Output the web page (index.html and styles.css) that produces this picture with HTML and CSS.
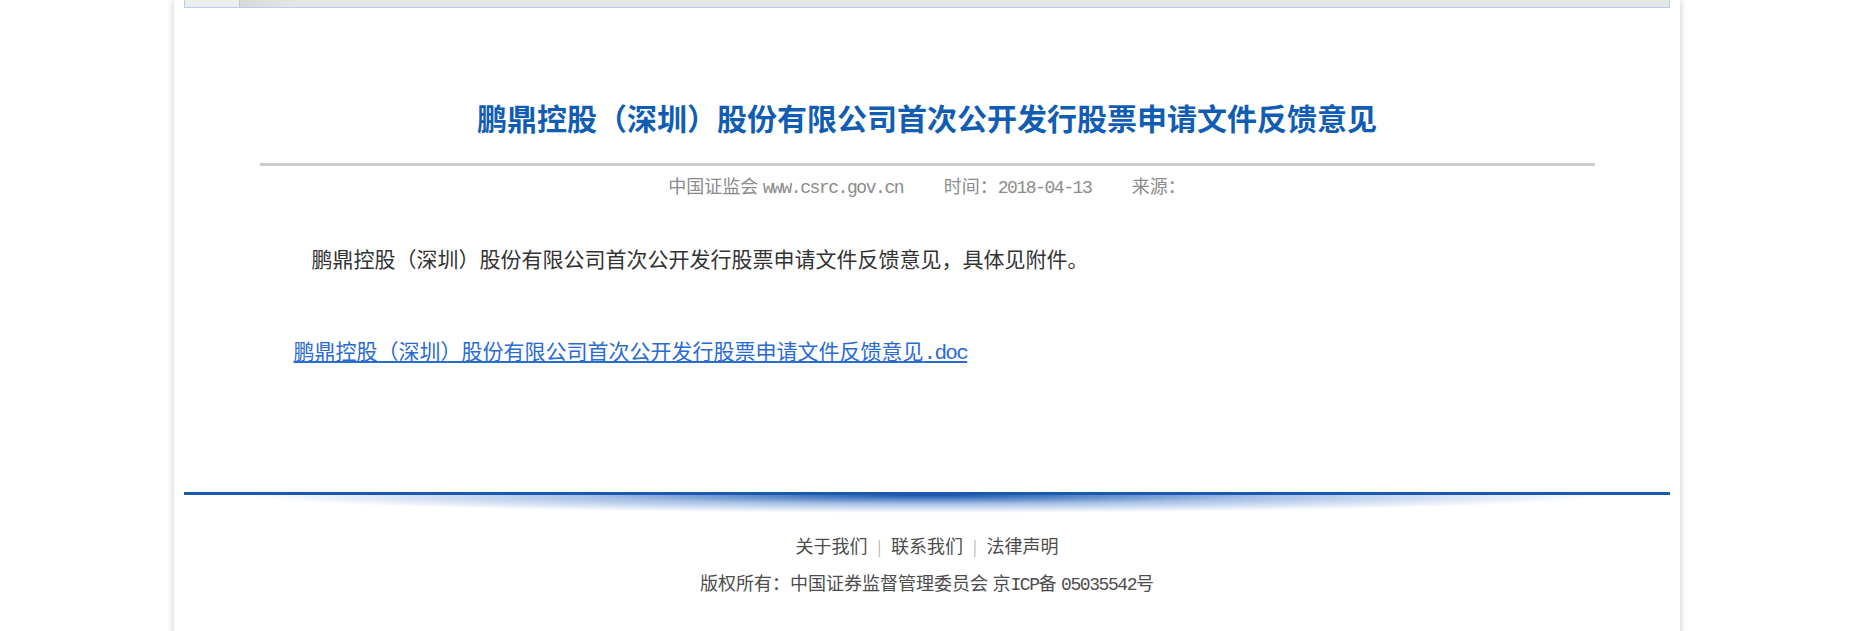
FILE: index.html
```html
<!DOCTYPE html>
<html>
<head>
    <meta charset="utf-8">
    <title>鹏鼎控股（深圳）股份有限公司首次公开发行股票申请文件反馈意见</title>
    <link rel="stylesheet" href="styles.css">
</head>
<body>
    <div class="page">
        <div class="topbar">
            <div class="topbar-home"></div>
            <div class="topbar-rest"></div>
        </div>

        <div class="article">
            <h2 class="title">鹏鼎控股（深圳）股份有限公司首次公开发行股票申请文件反馈意见</h2>
            <div class="meta">
                <span>中国证监会 <span class="en">www.csrc.gov.cn</span></span>
                <span class="meta-item">时间：<span class="en">2018-04-13</span></span>
                <span class="meta-item">来源：</span>
            </div>
            <div class="content">
                <p class="lead">鹏鼎控股（深圳）股份有限公司首次公开发行股票申请文件反馈意见，具体见附件。</p>
                <p class="attach"><a href="#">鹏鼎控股（深圳）股份有限公司首次公开发行股票申请文件反馈意见<span class="en">.doc</span></a></p>
            </div>
        </div>

        <div class="footer">
            <div class="footer-line"></div>
            <div class="footer-glow"></div>
            <div class="footer-links">
                <a href="#">关于我们</a><span class="sep">|</span><a href="#">联系我们</a><span class="sep">|</span><a href="#">法律声明</a>
            </div>
            <div class="copyright">版权所有：中国证券监督管理委员会 京<span class="en">ICP</span>备 <span class="en">05035542</span>号</div>
        </div>
    </div>
</body>
</html>
```

FILE: styles.css
```css
body {
    margin: 0;
    background: #fff;
    font-family: "Liberation Serif", "Noto Sans CJK SC", serif;
    color: #333;
}
.page {
    width: 1486px;
    margin: 0 auto;
    padding: 0 10px 40px;
    background: #fff;
    box-shadow: 0 0 7px rgba(0, 0, 0, 0.22);
}
.topbar {
    display: flex;
    height: 7px;
    border: 1px solid #b7cfeb;
    border-top: none;
}
.topbar-home {
    width: 54px;
    background: #ededed;
    border-right: 1px solid #c8c8c8;
}
.topbar-rest {
    flex: 1;
    background: linear-gradient(to right, #d9d9d9, #e6e6e6 60px, #e6e6e6);
}
.en {
    font-family: "Liberation Mono", monospace;
    letter-spacing: -0.08em;
}
.article {
    width: 1335px;
    margin: 0 auto;
}
.title {
    margin: 0;
    padding: 86px 0 23px;
    line-height: 46px;
    font-family: "Noto Sans CJK SC", sans-serif;
    font-size: 30px;
    font-weight: bold;
    color: #115db4;
    text-align: center;
    border-bottom: 3px solid #cccccc;
}
.meta {
    padding-top: 6px;
    line-height: 30px;
    font-size: 18px;
    color: #8c8c8c;
    text-align: center;
}
.meta-item {
    margin-left: 36px;
}
.content {
    padding: 39px 34px 0;
    font-size: 21px;
}
.content p {
    margin: 0;
    line-height: 36px;
}
.lead {
    text-indent: 18px;
    color: #333;
}
.attach {
    margin-top: 56px !important;
}
.attach a {
    color: #2a6bd0;
    text-decoration: underline;
}
.footer {
    margin-top: 120px;
    text-align: center;
}
.footer-line {
    height: 3px;
    background: #1a5aae;
}
.footer-glow {
    height: 18px;
    background: radial-gradient(ellipse 46% 100% at 50% 0%, rgba(20, 84, 172, 1), rgba(80, 130, 205, 0.5) 50%, rgba(255, 255, 255, 0) 100%);
}
.footer-links {
    margin-top: 19px;
    line-height: 30px;
    font-size: 18px;
}
.footer-links a {
    color: #4d4d4d;
    text-decoration: none;
}
.sep {
    margin: 0 10px;
    color: #aaa;
}
.copyright {
    margin-top: 7px;
    line-height: 30px;
    font-size: 18px;
    color: #4d4d4d;
}
```
